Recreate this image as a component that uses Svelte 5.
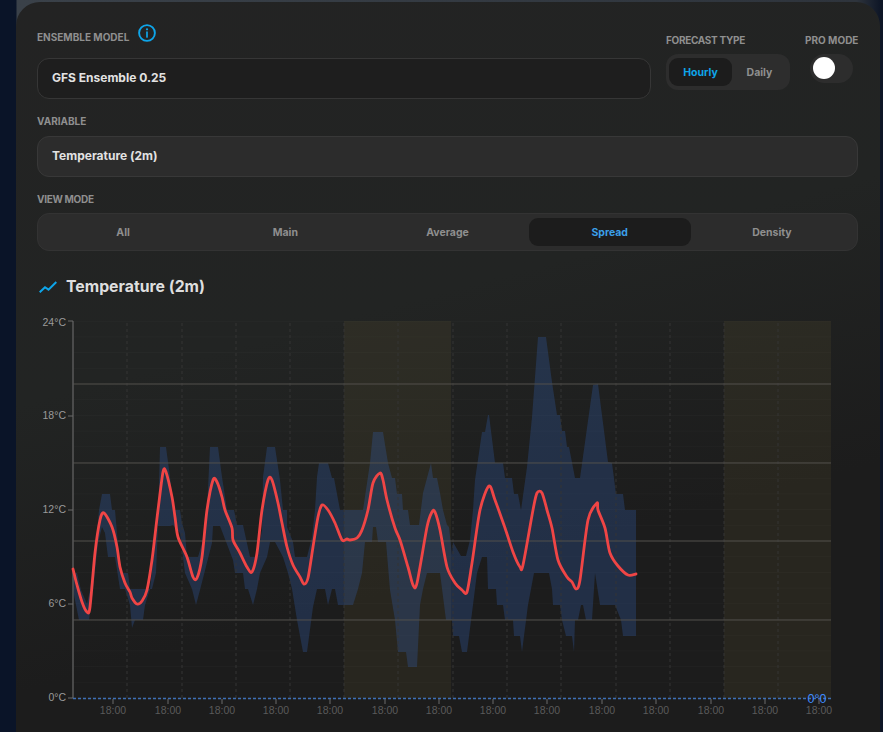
<script>
  const W = 883, H = 732;
  const upper = [[73,573],[77,573],[81,590],[87,604],[90,590],[95,555],[99,510],[102,494],[110,494],[112,510],[115,510],[119,556],[122,573],[128,573],[130,589],[152,589],[156,573],[158,525],[160,447],[166,447],[170,477],[173,510],[180,510],[182,523],[185,533],[187,557],[198,557],[203,540],[207,510],[210,447],[218,447],[222,477],[227,510],[234,510],[237,525],[243,525],[250,557],[257,557],[262,530],[263,477],[267,447],[275,447],[280,480],[283,510],[287,510],[287,527],[293,542],[295,557],[307,557],[312,537],[315,510],[317,477],[319,463],[328,463],[332,478],[334,478],[340,510],[363,510],[370,463],[373,432],[383,432],[388,463],[392,478],[395,478],[397,494],[402,494],[403,510],[408,510],[410,525],[419,525],[423,493],[427,478],[431,463],[433,478],[437,478],[440,493],[443,510],[447,525],[449,527],[452,555],[453,542],[461,556],[466,556],[470,540],[473,510],[475,480],[482,432],[485,432],[488,415],[489,415],[495,463],[503,463],[505,478],[512,478],[514,494],[518,494],[521,510],[527,467],[532,417],[538,337],[546,337],[552,382],[557,415],[560,415],[562,431],[565,431],[567,447],[569,447],[575,478],[580,478],[593,385],[598,384],[608,462],[612,463],[616,494],[623,494],[625,510],[636,510]];
  const lower = [[636,636],[623,636],[621,620],[615,605],[600,605],[595,573],[592,620],[586,620],[583,605],[581,605],[578,620],[575,620],[574,652],[572,636],[566,636],[562,620],[560,605],[553,605],[552,589],[549,573],[534,573],[531,589],[528,605],[524,636],[522,652],[520,636],[514,636],[513,620],[505,620],[503,605],[497,605],[496,589],[488,589],[487,557],[482,557],[477,573],[473,605],[467,652],[462,652],[459,636],[453,636],[452,620],[446,620],[440,573],[427,573],[423,589],[420,605],[417,667],[408,667],[406,652],[398,652],[395,620],[390,590],[386,542],[378,542],[376,527],[373,527],[372,542],[365,542],[362,573],[358,589],[353,605],[338,605],[335,589],[332,589],[328,605],[325,589],[317,589],[313,607],[307,652],[303,652],[297,620],[292,589],[288,573],[283,557],[275,542],[270,542],[267,557],[260,573],[257,589],[253,605],[248,589],[245,589],[243,573],[235,573],[233,560],[220,526],[213,526],[212,543],[200,590],[196,605],[192,589],[185,573],[180,533],[173,525],[170,526],[158,526],[155,540],[150,589],[145,605],[143,620],[135,620],[132,628],[130,605],[125,589],[120,589],[115,557],[108,557],[105,533],[102,527],[98,543],[93,590],[89,620],[79,620],[73,590]];
  const red = [[73,569],[77,585],[82,602],[87,612],[90,607],[95,553],[100,520],[104,513],[112,527],[117,547],[120,567],[125,583],[130,592],[132,598],[137,604],[142,601],[147,590],[152,560],[158,510],[163,472],[166,472],[172,497],[175,517],[178,537],[187,557],[193,577],[197,578],[202,557],[207,510],[213,480],[217,482],[222,497],[225,510],[232,528],[233,540],[240,553],[247,567],[252,572],[257,553],[262,510],[268,480],[272,480],[278,503],[282,523],[287,547],[293,565],[300,577],[304,584],[308,578],[313,547],[318,517],[322,505],[328,510],[335,523],[342,540],[347,539],[350,540],[357,538],[362,530],[368,510],[373,483],[380,473],[383,480],[387,500],[395,528],[400,540],[408,567],[413,585],[417,583],[427,527],[432,512],[435,512],[440,530],[447,567],[455,583],[462,590],[467,592],[472,563],[480,510],[489,486],[495,500],[505,528],[513,552],[520,567],[523,565],[533,510],[537,493],[542,493],[547,510],[552,528],[558,560],[567,577],[572,582],[576,589],[580,580],[588,520],[597,503],[598,510],[605,528],[610,553],[618,566],[628,575],[636,574]];
  const pts = (a) => a.map((p) => p[0] + ',' + p[1]).join(' ');
  // Catmull-Rom through the sampled temperatures, for the soft curve of the series
  const smooth = (a) => {
    let d = 'M' + a[0][0] + ' ' + a[0][1];
    for (let i = 0; i < a.length - 1; i++) {
      const p0 = a[Math.max(i - 1, 0)], p1 = a[i], p2 = a[i + 1], p3 = a[Math.min(i + 2, a.length - 1)];
      const t = 7;
      d += ' C' + (p1[0] + (p2[0] - p0[0]) / t).toFixed(1) + ' ' + (p1[1] + (p2[1] - p0[1]) / t).toFixed(1) +
        ' ' + (p2[0] - (p3[0] - p1[0]) / t).toFixed(1) + ' ' + (p2[1] - (p3[1] - p1[1]) / t).toFixed(1) +
        ' ' + p2[0] + ' ' + p2[1];
    }
    return d;
  };
  const hMinor = Array.from({ length: 25 }, (_, i) => 698 - i * 15.7);
  const hMajor = [620, 541, 463, 384];
  const vDash = [127, 182, 236, 290, 344, 398, 453, 507, 561, 616, 670, 724, 778];
  const xTicks = [113, 168, 222, 276, 330, 385, 439, 493, 547, 602, 656, 711, 765, 819];
  const yTicks = [[698, '0°C'], [604, '6°C'], [510, '12°C'], [416, '18°C'], [323, '24°C']];
  const modes = ['All', 'Main', 'Average', 'Spread', 'Density'];
</script>

<div class="page">
  <main class="panel">
    <div class="top">
      <div class="model">
        <div class="label-row">
          <span class="label">ENSEMBLE MODEL</span>
          <svg class="info" viewBox="0 0 18 18" width="18" height="18" aria-hidden="true">
            <circle cx="9" cy="9" r="7.9" fill="none" stroke="#0ea5e9" stroke-width="1.9" />
            <path d="M9 8v5" stroke="#0ea5e9" stroke-width="1.7" stroke-linecap="round" />
            <circle cx="9" cy="5.3" r="1.1" fill="#0ea5e9" />
          </svg>
        </div>
        <div class="select dark">GFS Ensemble 0.25</div>
      </div>
      <div class="forecast">
        <span class="label">FORECAST TYPE</span>
        <div class="toggle">
          <span class="opt on">Hourly</span>
          <span class="opt">Daily</span>
        </div>
      </div>
      <div class="pro">
        <span class="label">PRO MODE</span>
        <div class="switch"><span class="knob"></span></div>
      </div>
    </div>

    <section class="field">
      <span class="label">VARIABLE</span>
      <div class="select">Temperature (2m)</div>
    </section>

    <section class="field view">
      <span class="label">VIEW MODE</span>
      <div class="segments">
        {#each modes as m}
          <span class="seg" class:active={m === 'Spread'}>{m}</span>
        {/each}
      </div>
    </section>

    <h2 class="title">
      <svg viewBox="0 0 18 12" width="18" height="12" aria-hidden="true">
        <path d="M0.7 11.3 L6 6.2 L9.5 8.6 L17.3 1" fill="none" stroke="#0ea5e9" stroke-width="2" />
      </svg>
      Temperature (2m)
    </h2>
  </main>

  <svg class="chart" viewBox="0 0 {W} {H}" width={W} height={H} aria-hidden="true">
    {#each hMinor as y}<line x1="73" x2="831" y1={y} y2={y} class="minor" />{/each}
    <rect x="344" y="321" width="107" height="377" class="night" />
    <rect x="724" y="321" width="107" height="377" class="night" />
    <polygon points={pts([...upper, ...lower])} class="band" />
    {#each vDash as x}<line x1={x} x2={x} y1="323" y2="698" class="dash" />{/each}
    {#each hMajor as y}<line x1="73" x2="831" y1={y} y2={y} class="major" />{/each}
    <line x1="73" x2="73" y1="321" y2="698" class="axis" />
    <line x1="73" x2="831" y1="698.5" y2="698.5" class="zero" />
    {#each yTicks as t}
      <line x1="68" x2="73" y1={t[0] === 323 ? 321 : t[0]} y2={t[0] === 323 ? 321 : t[0]} class="axis thin" />
      <text x="66" y={t[0] + 3} class="ylab">{t[1]}</text>
    {/each}
    {#each xTicks as x}
      <line x1={x} x2={x} y1="699" y2="704" class="axis thin" />
      <text x={x} y="714" class="xlab">18:00</text>
    {/each}
    <path d={smooth(red)} class="temp" />
    <text x="817" y="703" class="zero-lab">0°0</text>
  </svg>
</div>

<style>
  :global(body) {
    margin: 0;
    background: #0a1428;
  }
  .page {
    position: relative;
    width: 883px;
    height: 732px;
    overflow: hidden;
    font-family: Inter, "Liberation Sans", sans-serif;
    background: linear-gradient(90deg, #0a1428 0, #0a1428 16px, #3a4149 17px, #2e343c 97%, #0d1526 99.8%);
  }
  .panel {
    box-sizing: border-box;
    position: relative;
    margin: 2px 0 0 16px;
    width: 864px;
    height: 730px;
    padding: 22px 22px 0 21px;
    border-radius: 24px 24px 0 0;
    background: linear-gradient(165deg, #232323, #222423 42%, #1c1c1c 72%);
    display: flex;
    flex-direction: column;
  }
  .label {
    display: block;
    font-size: 10px;
    font-weight: 700;
    line-height: 12px;
    color: #8f8f8f;
    white-space: nowrap;
  }
  .top {
    display: flex;
    align-items: flex-start;
    gap: 15px;
  }
  .model {
    flex: 1;
  }
  .label-row {
    display: flex;
    align-items: flex-start;
    gap: 9px;
    height: 34px;
  }
  .label-row .label {
    margin-top: 7px;
  }
  .select {
    box-sizing: border-box;
    height: 41px;
    padding: 0 14px 2px;
    display: flex;
    align-items: center;
    font-size: 12px;
    font-weight: 700;
    color: #e2e2e2;
    border-radius: 12px;
    background: #2c2c2c;
    border: 1px solid #383838;
  }
  .select.dark {
    background: #1e1e1e;
    border-color: #363636;
  }
  .forecast {
    width: 124px;
    padding-top: 10px;
  }
  .forecast .label,
  .view .label {
    letter-spacing: -0.3px;
  }
  .toggle {
    box-sizing: border-box;
    margin-top: 8px;
    height: 36px;
    padding: 4px 3px;
    display: flex;
    border-radius: 12px;
    background: #2d2d2d;
  }
  .opt {
    flex: 1;
    display: flex;
    align-items: center;
    justify-content: center;
    font-size: 10.5px;
    font-weight: 700;
    color: #8f8f8f;
    border-radius: 9px;
  }
  .opt.on {
    flex: 0 0 63px;
    color: #0ea5e9;
    background: #1c1c1c;
  }
  .pro {
    width: 53px;
    padding-top: 10px;
  }
  .switch {
    box-sizing: border-box;
    margin: 8px 0 0 5px;
    width: 43px;
    height: 29px;
    padding: 3px;
    border-radius: 15px;
    background: #2d2d2d;
  }
  .knob {
    display: block;
    width: 22px;
    height: 22px;
    border-radius: 50%;
    background: #fff;
  }
  .field {
    margin-top: 16px;
  }
  .field .label {
    margin-bottom: 9px;
  }
  .view .label {
    margin-bottom: 8px;
  }
  .segments {
    box-sizing: border-box;
    height: 38px;
    padding: 4px 4px;
    display: grid;
    grid-template-columns: repeat(5, 1fr);
    border-radius: 12px;
    background: #2c2c2c;
    border: 1px solid #333;
  }
  .seg {
    display: flex;
    align-items: center;
    justify-content: center;
    font-size: 10.5px;
    font-weight: 700;
    color: #8f8f8f;
    border-radius: 9px;
  }
  .seg.active {
    color: #3b9fe8;
    background: #1c1c1c;
  }
  .title {
    margin: 26px 0 0 2px;
    display: flex;
    align-items: center;
    gap: 9px;
    font-size: 15.8px;
    line-height: 20px;
    font-weight: 700;
    color: #dedede;
  }
  .chart {
    position: absolute;
    left: 0;
    top: 0;
    font-family: "Liberation Sans", sans-serif;
  }
  .minor {
    stroke: rgba(255, 255, 255, 0.025);
    stroke-width: 1;
  }
  .night {
    fill: rgba(234, 200, 90, 0.06);
  }
  .band {
    fill: rgba(52, 100, 185, 0.27);
  }
  .dash {
    stroke: #343434;
    stroke-width: 1;
    stroke-dasharray: 3 3;
  }
  .major {
    stroke: #504f4b;
    stroke-width: 1;
  }
  .axis {
    stroke: #565656;
    stroke-width: 1.6;
  }
  .axis.thin {
    stroke-width: 1;
    stroke: #6a6a6a;
  }
  .zero {
    stroke: #3f6fb5;
    stroke-width: 1.4;
    stroke-dasharray: 3 2;
  }
  .temp {
    fill: none;
    stroke: #f04545;
    stroke-width: 2.8;
    stroke-linejoin: round;
    stroke-linecap: round;
  }
  .ylab {
    font-size: 10.5px;
    fill: #9a9a9a;
    text-anchor: end;
  }
  .xlab {
    font-size: 10.5px;
    fill: #5a5a5a;
    text-anchor: middle;
  }
  .zero-lab {
    font-size: 12.5px;
    fill: #3f8cff;
    text-anchor: middle;
  }
</style>
